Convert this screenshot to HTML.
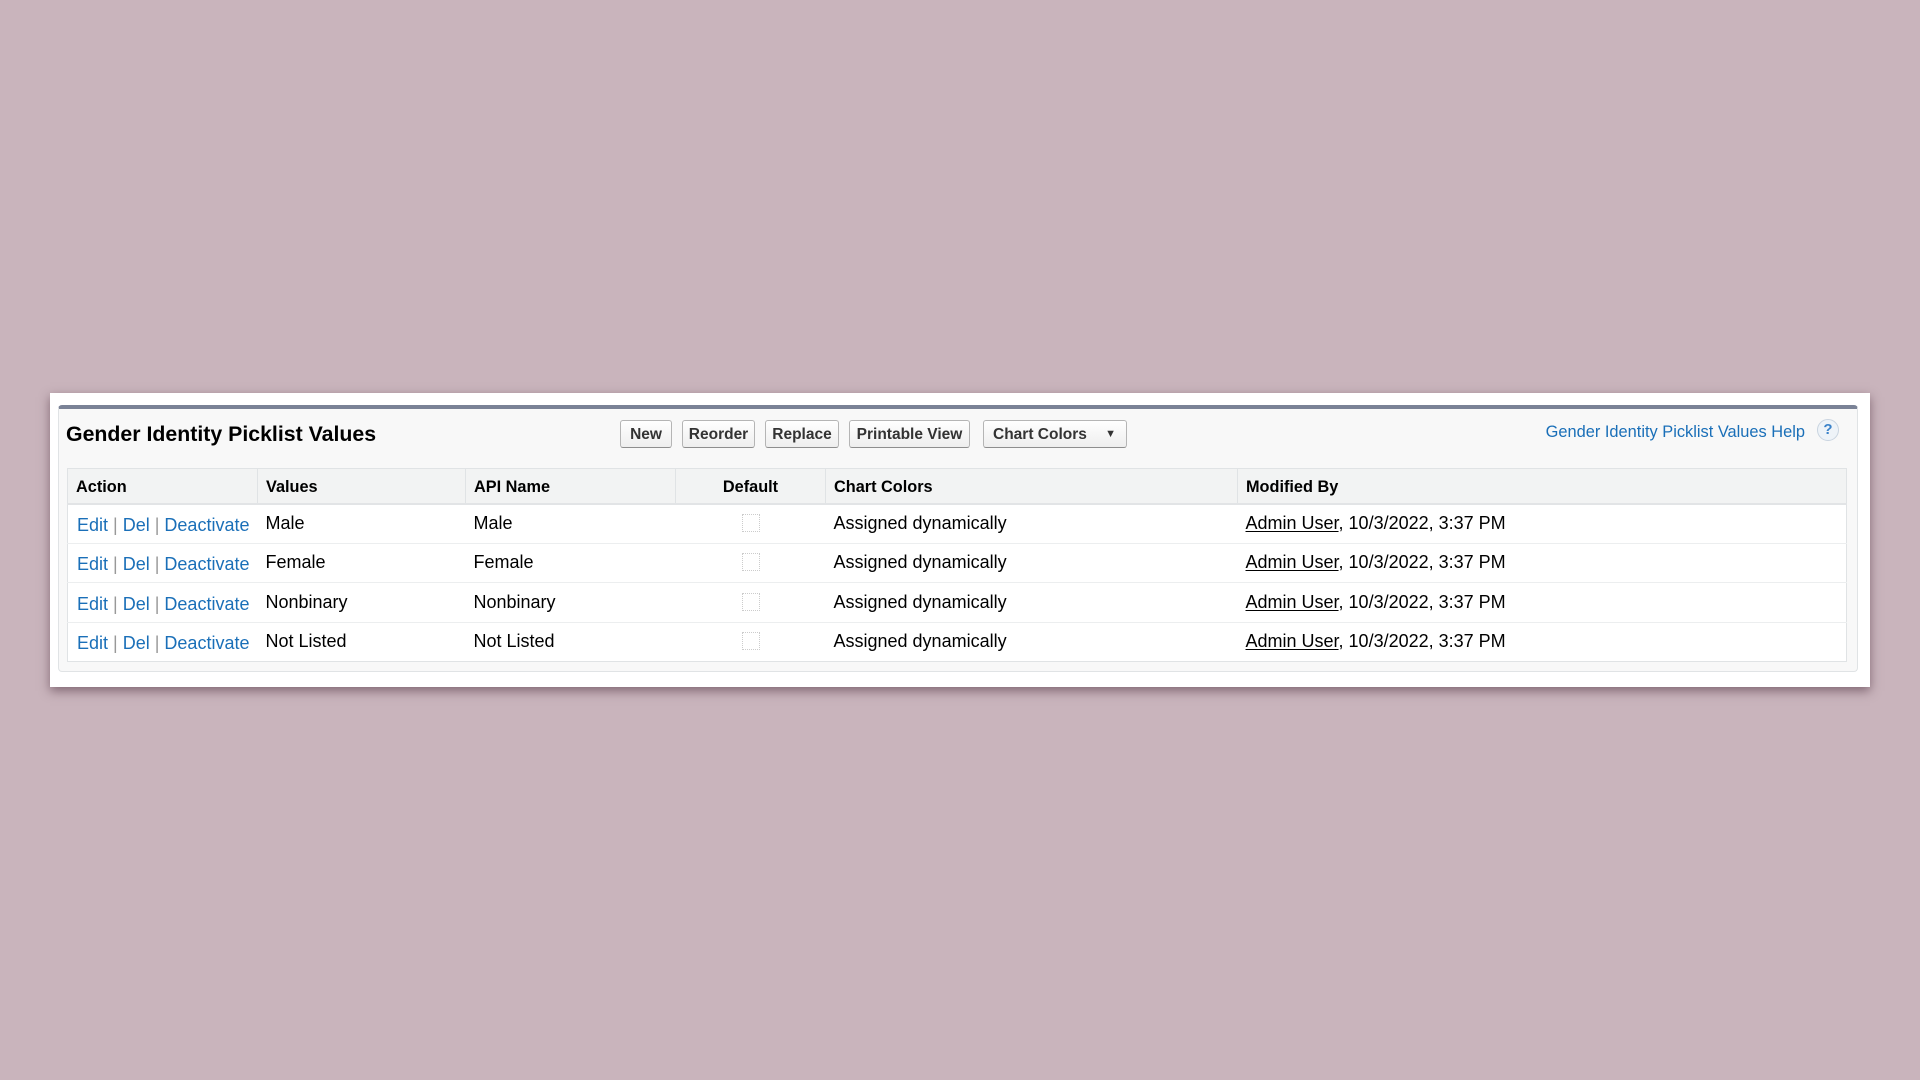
<!DOCTYPE html>
<html><head><meta charset="utf-8"><style>
*{box-sizing:border-box;margin:0;padding:0}
body{width:1920px;height:1080px;background:#c9b4bc;font-family:"Liberation Sans",Arial,sans-serif;position:relative;overflow:hidden}
.card{position:absolute;left:50px;top:393px;width:1820px;height:294px;background:#fff;box-shadow:0 4px 10px rgba(70,40,55,.55)}
.panel{position:absolute;left:58px;top:405px;width:1800px;height:267px;background:#f8f8f8;border:1px solid #e0e3e5;border-top:4px solid #7a8296;border-radius:4px}
.title{position:absolute;left:66px;top:422px;font-size:21.3px;font-weight:bold;color:#000}
.btn{position:absolute;top:420px;height:28px;border:1px solid #b5b5b5;border-bottom-color:#8e8e8e;border-radius:3px;background:linear-gradient(#fff,#eeeeee);font-size:15.5px;font-weight:bold;color:#333;text-align:center;line-height:27px}
.help{position:absolute;right:115px;top:423px;font-size:16.4px;color:#1a6fb8}
.q{position:absolute;left:1817px;top:419px;width:22px;height:22px;border-radius:50%;border:1px solid #c9d4e0;background:#eef3f8;color:#3b82c9;font-size:15px;font-weight:bold;text-align:center;line-height:20px}
table{position:absolute;left:67px;top:468px;width:1780px;table-layout:fixed;border-collapse:collapse;font-size:18px;color:#000;background:#fff;border:1px solid #e0e3e5}
th{background:#f2f3f3;height:35px;font-weight:bold;font-size:16.3px;text-align:left;padding:3px 8px 0;border-right:1px solid #e0e3e5;border-bottom:2px solid #e2e4e6}
td{height:39.5px;padding:0 8px;border-top:1px solid #eceeef;vertical-align:middle;white-space:nowrap;overflow:visible}
td.a{color:#1a6fb8;padding-top:4px;padding-left:9px;padding-right:0;font-size:18px}
td.a span{color:#999}
.cb{display:inline-block;width:18px;height:18px;border:1px dotted #ccc;margin-top:4px}
u{text-underline-offset:2px}
</style></head><body>
<div class="card"></div>
<div class="panel"></div>
<div class="title">Gender Identity Picklist Values</div>
<div class="btn" style="left:620px;width:52px">New</div>
<div class="btn" style="left:682px;width:73px">Reorder</div>
<div class="btn" style="left:765px;width:74px">Replace</div>
<div class="btn" style="left:849px;width:121px">Printable View</div>
<div class="btn" style="left:983px;width:144px;text-align:left;padding-left:9px">Chart Colors <span style="position:absolute;right:10px;font-size:11px">▼</span></div>
<div class="help">Gender Identity Picklist Values Help</div>
<div class="q">?</div>
<table>
<colgroup><col style="width:190px"><col style="width:208px"><col style="width:210px"><col style="width:150px"><col style="width:412px"><col></colgroup>
<tr><th>Action</th><th>Values</th><th>API Name</th><th style="text-align:center">Default</th><th>Chart Colors</th><th style="border-right:none">Modified By</th></tr>
<tr><td class="a">Edit <span>|</span> Del <span>|</span> Deactivate</td><td>Male</td><td>Male</td><td style="text-align:center"><span class="cb"></span></td><td>Assigned dynamically</td><td><u>Admin User</u>, 10/3/2022, 3:37 PM</td></tr>
<tr><td class="a">Edit <span>|</span> Del <span>|</span> Deactivate</td><td>Female</td><td>Female</td><td style="text-align:center"><span class="cb"></span></td><td>Assigned dynamically</td><td><u>Admin User</u>, 10/3/2022, 3:37 PM</td></tr>
<tr><td class="a">Edit <span>|</span> Del <span>|</span> Deactivate</td><td>Nonbinary</td><td>Nonbinary</td><td style="text-align:center"><span class="cb"></span></td><td>Assigned dynamically</td><td><u>Admin User</u>, 10/3/2022, 3:37 PM</td></tr>
<tr><td class="a">Edit <span>|</span> Del <span>|</span> Deactivate</td><td>Not Listed</td><td>Not Listed</td><td style="text-align:center"><span class="cb"></span></td><td>Assigned dynamically</td><td><u>Admin User</u>, 10/3/2022, 3:37 PM</td></tr>
</table>
</body></html>
